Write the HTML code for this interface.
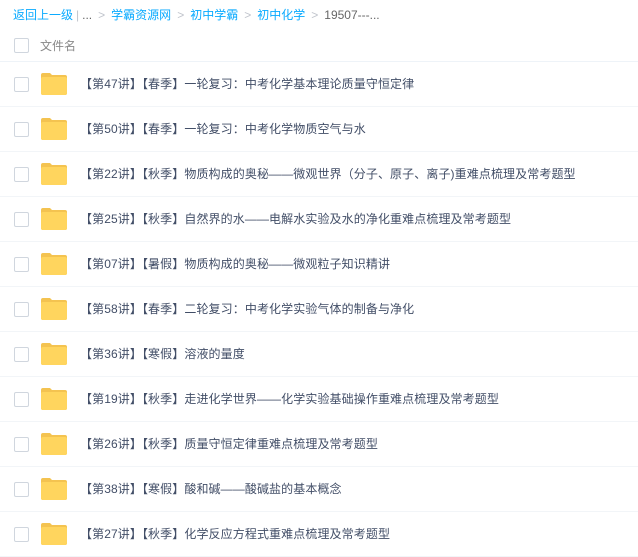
<!DOCTYPE html>
<html><head><meta charset="utf-8"><style>
body{margin:0;width:638px;height:556px;overflow:hidden;background:#fff;font-family:"Liberation Sans","Noto Sans CJK SC",sans-serif;font-size:12px;color:#424e67}
.bc{position:absolute;left:13px;top:6px;height:18px;line-height:18px;color:#09aaff;white-space:nowrap}
.bc .g{color:#c0c4cc;margin:0 6px}
.bc .d{color:#666}
.hd{position:absolute;left:0;top:30px;width:638px;height:31px;border-bottom:1px solid #eef3f8}
.cb{position:absolute;left:14px;width:13px;height:13px;border:1px solid #d0d6de;border-radius:2px;background:#fff}
.row{position:absolute;left:0;width:638px;height:44px;border-bottom:1px solid #f2f5f8}
.fold{position:absolute;left:41px;width:26px;height:22px}
.t{position:absolute;left:80px;line-height:16px;white-space:nowrap;letter-spacing:0.1px}
</style></head><body>
<div class="bc">返回上一级<span style="color:#c0c4cc;margin:0 3px">|</span><span class="d">...</span><span class="g">&gt;</span>学霸资源网<span class="g">&gt;</span>初中学霸<span class="g">&gt;</span>初中化学<span class="g">&gt;</span><span class="d">19507---...</span></div>
<div class="hd"><div class="cb" style="top:8px"></div><div style="position:absolute;left:40px;top:7px;color:#888">文件名</div></div>
<div id="rows"></div>
<script>
var items=["【第47讲】【春季】一轮复习：中考化学基本理论质量守恒定律","【第50讲】【春季】一轮复习：中考化学物质空气与水","【第22讲】【秋季】物质构成的奥秘——微观世界（分子、原子、离子)重难点梳理及常考题型","【第25讲】【秋季】自然界的水——电解水实验及水的净化重难点梳理及常考题型","【第07讲】【暑假】物质构成的奥秘——微观粒子知识精讲","【第58讲】【春季】二轮复习：中考化学实验气体的制备与净化","【第36讲】【寒假】溶液的量度","【第19讲】【秋季】走进化学世界——化学实验基础操作重难点梳理及常考题型","【第26讲】【秋季】质量守恒定律重难点梳理及常考题型","【第38讲】【寒假】酸和碱——酸碱盐的基本概念","【第27讲】【秋季】化学反应方程式重难点梳理及常考题型"];
var h="";
items.forEach(function(s,i){var top=62+45*i;
h+='<div class="row" style="top:'+top+'px"><div class="cb" style="top:15px"></div><svg class="fold" style="top:11px" viewBox="0 0 26 22"><path d="M0 2a2 2 0 0 1 2-2h7l2 2h13a2 2 0 0 1 2 2v16a2 2 0 0 1-2 2H2a2 2 0 0 1-2-2z" fill="#f4c350"/><rect x="0" y="4" width="26" height="18" rx="2" fill="#ffd55e"/></svg><div class="t" style="top:14px">'+s+'</div></div>';});
document.getElementById("rows").innerHTML=h;
</script>
</body></html>
